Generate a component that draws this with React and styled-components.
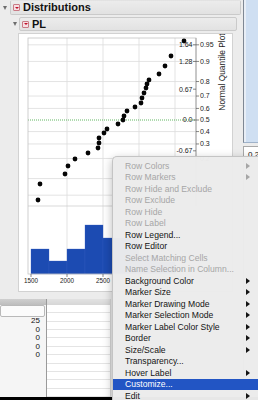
import React from 'react';
import styled, { createGlobalStyle } from 'styled-components';

const Global = createGlobalStyle`
  html, body { margin: 0; padding: 0; }
  body {
    background: #ececec;
    font-family: "Liberation Sans", Arial, sans-serif;
    overflow: hidden;
  }
`;

const Screen = styled.div`
  position: relative;
  width: 258px;
  height: 400px;
  overflow: hidden;
  display: grid;
  grid-template-columns: 243px 15px;
  grid-template-rows: 397px 3px;
  background: #ececec;
`;

const Main = styled.div`
  display: flex;
  flex-direction: column;
  min-width: 0;
`;

const OutlineRow = styled.div`
  display: flex;
  align-items: stretch;
  height: ${p => p.$h}px;
  margin-top: ${p => p.$mt || 0}px;
  padding-left: ${p => p.$indent || 0}px;
`;

const Toggle = styled.div`
  width: ${p => p.$w}px;
  display: flex;
  align-items: center;
  justify-content: center;
  &::before {
    content: '';
    border-left: 2.5px solid transparent;
    border-right: 2.5px solid transparent;
    border-top: 4px solid #6d6d6d;
  }
`;

const TitleBox = styled.div`
  flex: 1;
  display: flex;
  align-items: center;
  gap: 3px;
  padding-left: 2px;
  margin-right: ${p => p.$mr}px;
  background: linear-gradient(#ececec, #e2e2e2);
  border: 1px solid #cacaca;
  border-top-color: ${p => (p.$noTop ? 'transparent' : '#cacaca')};
  border-radius: 2px;
`;

const RedMenu = styled.span`
  width: 7px;
  height: 7px;
  box-sizing: border-box;
  border: 1px solid #c97b86;
  background: #f6dfe3;
  border-radius: 1px;
  display: flex;
  align-items: center;
  justify-content: center;
  &::before {
    content: '';
    border-left: 2px solid transparent;
    border-right: 2px solid transparent;
    border-top: 2.5px solid #c0102a;
  }
`;

const Title = styled.span`
  font-weight: bold;
  font-size: 11px;
  color: #111;
  line-height: 1;
`;

const Panel = styled.div`
  margin: 2px 10px 0 18px;
  height: 259px;
  box-sizing: border-box;
  background: #fff;
  border: 1px solid #d2d2d2;
`;

const Chart = styled.svg`
  display: block;
`;

const TableArea = styled.div`
  margin-top: 7px;
  flex: 1;
  display: flex;
  min-height: 0;
`;

const RowPane = styled.div`
  width: 46px;
  display: flex;
  flex-direction: column;
  background: #f5f5f5;
`;

const Band = styled.div`
  height: 6px;
  background: ${p => p.$dark ? 'linear-gradient(#cfcfcf, #bdbdbd)' : 'linear-gradient(#e2e2e2, #d6d6d6)'};
`;

const HeaderCell = styled.div`
  height: 12px;
  box-sizing: border-box;
  margin: 0 1px 0 0;
  background: #fbfbfb;
  border: 1px solid #b9b9b9;
  border-radius: 2px;
`;

const Value = styled.div`
  height: 8.5px;
  line-height: 8.5px;
  font-size: 8px;
  text-align: right;
  padding-right: 6px;
  color: #111;
`;

const Divider = styled.div`
  width: 1px;
  background: #9a9a9a;
  box-shadow: 1px 0 0 #d0d0d0;
`;

const DataPane = styled.div`
  width: 63px;
  display: flex;
  flex-direction: column;
  background: #fff;
  border-right: 1px solid #d6d6d6;
`;

const DataRow = styled.div`
  height: 8.5px;
  box-sizing: border-box;
  border-bottom: 1px solid #e4e4e4;
`;

const Side = styled.div`
  display: flex;
  flex-direction: column;
`;

const BluePanel = styled.div`
  height: 143px;
  box-sizing: border-box;
  background: #cfdff2;
  border-left: 1px solid #7f8894;
  border-bottom: 1px solid #9fb2c9;
  box-shadow: inset 2px 0 0 #e8eef6;
`;

const ValueBox = styled.div`
  margin-top: 3px;
  flex: 1;
  background: #fff;
  border-top: 1px solid #a8a8a8;
  border-left: 1px solid #a8a8a8;
  font-size: 8px;
  padding: 3px 0 0 4px;
  color: #111;
`;

const BlackStrip = styled.div`
  grid-column: 1 / -1;
  background: #000;
`;

const Menu = styled.div`
  position: absolute;
  left: 112px;
  top: 156px;
  width: 150px;
  padding-top: 3px;
  background: rgba(236, 236, 236, 0.98);
  border: 1px solid #c4c4c4;
  border-right: none;
  border-radius: 5px 0 0 0;
  box-shadow: 0 3px 10px rgba(0, 0, 0, 0.28);
  z-index: 2;
`;

const MenuItem = styled.div`
  height: 11.5px;
  display: flex;
  align-items: center;
  justify-content: space-between;
  padding: 0 13.5px 0 12px;
  font-size: 8.6px;
  white-space: nowrap;
  color: ${p => (p.$active ? '#fff' : p.$disabled ? '#a6a6a6' : '#141414')};
  background: ${p => (p.$active ? '#2255c4' : 'transparent')};
`;

const Arrow = styled.span`
  border-top: 3px solid transparent;
  border-bottom: 3px solid transparent;
  border-left: 4.5px solid currentColor;
`;

const menuItems = [
  ['Row Colors', true, true],
  ['Row Markers', true, true],
  ['Row Hide and Exclude', true, false],
  ['Row Exclude', true, false],
  ['Row Hide', true, false],
  ['Row Label', true, false],
  ['Row Legend...', false, false],
  ['Row Editor', false, false],
  ['Select Matching Cells', true, false],
  ['Name Selection in Column...', true, false],
  ['Background Color', false, true],
  ['Marker Size', false, true],
  ['Marker Drawing Mode', false, true],
  ['Marker Selection Mode', false, true],
  ['Marker Label Color Style', false, true],
  ['Border', false, true],
  ['Size/Scale', false, true],
  ['Transparency...', false, false],
  ['Hover Label', false, true],
  ['Customize...', false, false, true],
  ['Edit', false, true],
];

const points = [
  [38, 200], [40, 184], [65, 174], [68, 166], [75, 159], [88, 153], [98, 148],
  [99, 143], [99, 138], [104, 133], [107, 129], [118, 124], [123, 120], [124, 116],
  [127, 111], [135, 107], [141, 103], [142, 98], [144, 93], [146, 88], [147, 84],
  [149, 80], [159, 74], [165, 66], [171, 56], [184, 41],
];

const zY = z => 120 - 45.7 * z;
const probs = [
  ['0.95', 1.645], ['0.9', 1.2816], ['0.8', 0.8416], ['0.7', 0.5244], ['0.6', 0.2533],
  ['0.5', 0], ['0.4', -0.2533], ['0.3', -0.5244], ['0.2', -0.8416],
];
const gridZ = [1.645, 1.2816, 0.8416, 0.5244, 0.2533, -0.2533, -0.5244, -0.8416, -1.2816, -1.645];
const quants = [['1.64', 1.645], ['1.28', 1.2816], ['0.67', 0.6745], ['0.0', 0], ['-0.67', -0.6745]];
const bars = [
  [31, 249], [49, 261], [67, 249], [85, 225], [103, 238], [121, 238], [139, 255], [157, 262],
];

function PlotChart() {
  const tf = { fontFamily: '"Liberation Sans", Arial, sans-serif', fill: '#222' };
  return (
    <Chart width="213" height="257" viewBox="19 34 213 257">
      <rect x="28" y="38" width="168" height="236" fill="#fff" />
      {[67, 103, 139, 175].map(x => (
        <line key={x} x1={x} y1="38" x2={x} y2="274" stroke="#dcdcdc" strokeWidth="0.8" />
      ))}
      {gridZ.map(z => (
        <line key={z} x1="28" y1={zY(z)} x2="196" y2={zY(z)} stroke="#dcdcdc" strokeWidth="0.8" />
      ))}
      <line x1="28" y1="120" x2="196" y2="120" stroke="#3aa53a" strokeWidth="0.8" strokeDasharray="1 1" />
      <line x1="28" y1="206" x2="196" y2="206" stroke="#cfcfcf" strokeWidth="0.8" />
      {bars.map(([x, top]) => (
        <rect key={x} x={x} y={top} width="18" height={274 - top} fill="#1c4bb2" stroke="#3b62c0" strokeWidth="0.3" />
      ))}
      <rect x="28" y="38" width="168" height="236" fill="none" stroke="#c4c4c4" strokeWidth="0.8" />
      {points.map(([x, y], i) => (
        <circle key={i} cx={x} cy={y} r="2.4" fill="#050505" />
      ))}
      <line x1="196" y1="38" x2="196" y2="206" stroke="#9a9a9a" strokeWidth="0.8" />
      {quants.map(([l, z]) => (
        <g key={l}>
          <line x1="193" y1={zY(z)} x2="196" y2={zY(z)} stroke="#555" strokeWidth="0.7" />
          <text x="192.5" y={zY(z) + 2.4} fontSize="7" textAnchor="end" style={tf}>{l}</text>
        </g>
      ))}
      {probs.map(([l, z]) => (
        <g key={l}>
          <line x1="196" y1={zY(z)} x2="199" y2={zY(z)} stroke="#555" strokeWidth="0.7" />
          <text x="200" y={zY(z) + 2.4} fontSize="7" style={tf}>{l}</text>
        </g>
      ))}
      <text transform="translate(225,72) rotate(-90)" fontSize="8.4" textAnchor="middle" style={tf}>
        Normal Quantile Plot
      </text>
      {[31, 67, 103, 139, 175].map(x => (
        <line key={x} x1={x} y1="274" x2={x} y2="277" stroke="#555" strokeWidth="0.7" />
      ))}
      {[[31, '1500'], [67, '2000'], [103, '2500']].map(([x, l]) => (
        <text key={l} x={x} y="283" fontSize="6.3" textAnchor="middle" style={tf}>{l}</text>
      ))}
    </Chart>
  );
}

export default function App() {
  return (
    <>
      <Global />
      <Screen>
        <Main>
          <OutlineRow $h={15}>
            <Toggle $w={10} />
            <TitleBox $mr={2} $noTop>
              <RedMenu />
              <Title>Distributions</Title>
            </TitleBox>
          </OutlineRow>
          <OutlineRow $h={14} $mt={2} $indent={10}>
            <Toggle $w={9} />
            <TitleBox $mr={6}>
              <RedMenu />
              <Title>PL</Title>
            </TitleBox>
          </OutlineRow>
          <Panel>
            <PlotChart />
          </Panel>
          <TableArea>
            <RowPane>
              <Band $dark />
              <HeaderCell />
              {['25', '0', '0', '0', '0'].map((v, i) => (
                <Value key={i}>{v}</Value>
              ))}
            </RowPane>
            <Divider />
            <DataPane>
              <Band />
              {Array.from({ length: 11 }).map((_, i) => (
                <DataRow key={i} />
              ))}
            </DataPane>
          </TableArea>
        </Main>
        <Side>
          <BluePanel />
          <ValueBox>0.2</ValueBox>
        </Side>
        <BlackStrip />
        <Menu>
          {menuItems.map(([label, disabled, sub, active]) => (
            <MenuItem key={label} $disabled={disabled} $active={active}>
              <span>{label}</span>
              {sub && <Arrow />}
            </MenuItem>
          ))}
        </Menu>
      </Screen>
    </>
  );
}
